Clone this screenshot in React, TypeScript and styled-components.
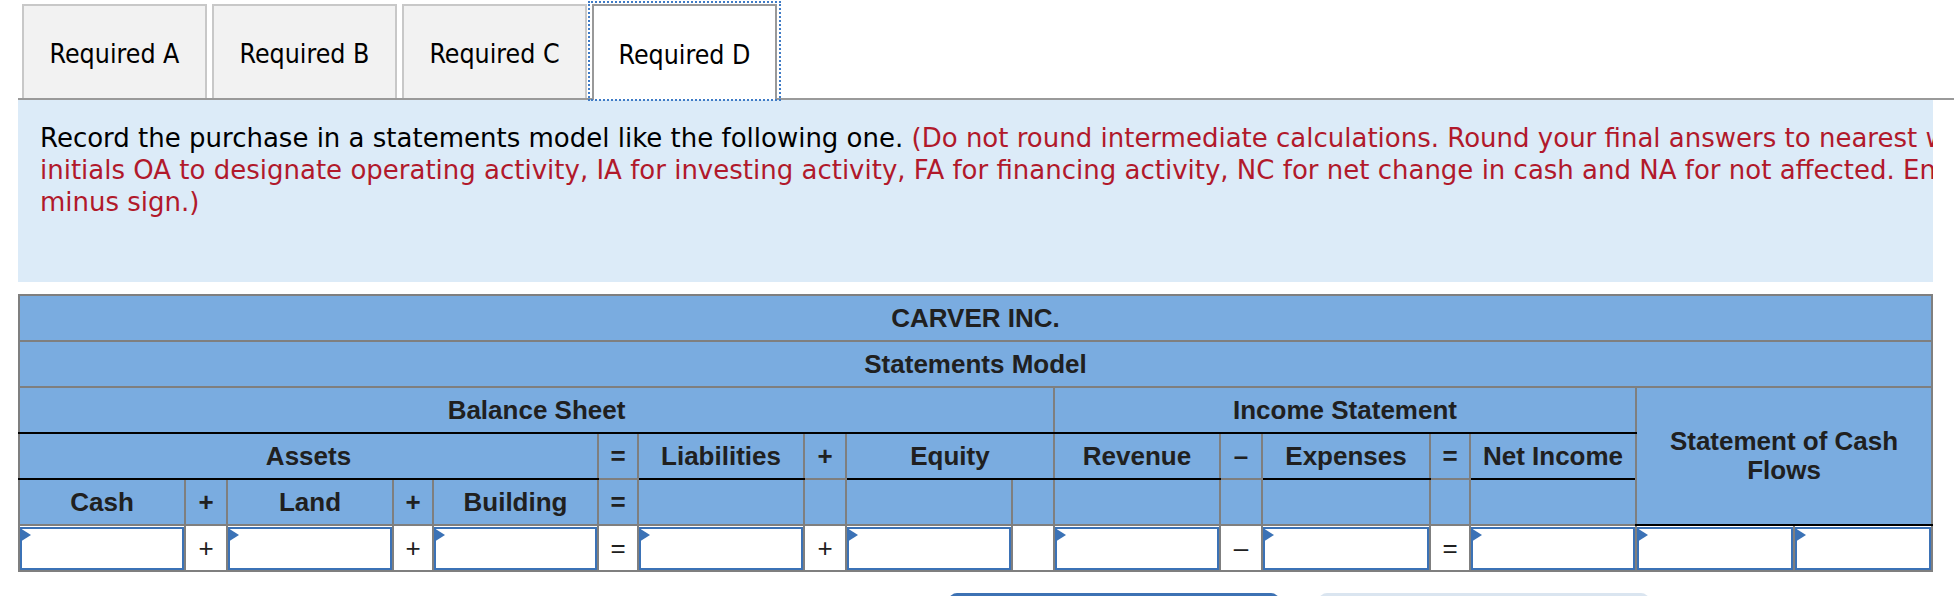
import React from "react";
import styled, { createGlobalStyle, css } from "styled-components";

const GlobalStyle = createGlobalStyle`
  html, body {
    margin: 0;
    padding: 0;
    background: #ffffff;
    overflow: hidden;
  }
  body {
    font-family: "DejaVu Sans", Verdana, sans-serif;
  }
`;

const Page = styled.div`
  padding-left: 18px;
`;

const TabBar = styled.div`
  display: flex;
  gap: 5px;
  padding: 4px 0 0 4px;
  border-bottom: 2px solid #9a9a9a;
  height: 94px;
`;

const Tab = styled.div<{ $active?: boolean }>`
  position: relative;
  box-sizing: border-box;
  width: 185px;
  height: 94px;
  padding-top: 3px;
  display: flex;
  align-items: center;
  justify-content: center;
  background: #f2f2f2;
  border: 2px solid #c8c8c8;
  border-bottom: none;
  color: #000;
  font-family: "DejaVu Sans Condensed", "DejaVu Sans", Verdana, sans-serif;
  font-stretch: condensed;
  font-size: 26.5px;
  ${(p) =>
    p.$active &&
    css`
      height: 96px;
      margin-bottom: -2px;
      background: #ffffff;
      border-color: #999999;
      &::after {
        content: "";
        position: absolute;
        top: -5px;
        left: -6px;
        right: -6px;
        bottom: -1px;
        border: 2px dotted #3f7bc6;
        pointer-events: none;
      }
    `}
`;

const Instructions = styled.div`
  box-sizing: border-box;
  width: 1915px;
  height: 182px;
  padding: 22px 0 0 22px;
  background: #dcebf8;
  overflow: hidden;
  white-space: nowrap;
  font-family: "DejaVu Sans", Verdana, sans-serif;
  font-size: 26px;
  line-height: 32px;
  color: #000;
`;

const Red = styled.span`
  color: #b1192b;
`;

const ModelTable = styled.table`
  margin-top: 12px;
  width: 1915px;
  table-layout: fixed;
  border-collapse: collapse;
  border: 2px solid #7f7f7f;
`;

const Col = styled.col<{ $w: number }>`
  width: ${(p) => p.$w}px;
`;

const HeadCell = styled.td<{ $rule?: boolean }>`
  box-sizing: border-box;
  height: 46px;
  padding: 0 4px;
  background: #7aace0;
  border: 2px solid #7f7f7f;
  ${(p) =>
    p.$rule &&
    css`
      border-bottom-color: #000000;
    `}
  text-align: center;
  vertical-align: middle;
  color: #202020;
  font-family: "Liberation Sans", Arial, sans-serif;
  font-weight: bold;
  font-size: 26px;
  line-height: 29px;
`;

const OpCell = styled.td`
  box-sizing: border-box;
  height: 46px;
  padding: 0;
  background: #ffffff;
  border: 2px solid #7f7f7f;
  text-align: center;
  vertical-align: middle;
  color: #202020;
  font-family: "Liberation Sans", Arial, sans-serif;
  font-size: 26px;
`;

const InputCell = styled.td`
  position: relative;
  box-sizing: border-box;
  height: 46px;
  padding: 0;
  background: #ffffff;
  border: 2px solid #7f7f7f;
`;

const AnswerInput = styled.input`
  display: block;
  box-sizing: border-box;
  width: 100%;
  height: 43px;
  margin: 0;
  padding: 0 6px;
  border: 2px solid #3b72b6;
  background: #ffffff;
  outline: none;
  font-family: "Liberation Sans", Arial, sans-serif;
  font-size: 20px;
`;

const Flag = styled.span`
  position: absolute;
  top: 2px;
  left: 0;
  width: 0;
  height: 0;
  border-top: 7px solid transparent;
  border-bottom: 7px solid transparent;
  border-left: 11px solid #3b72b6;
  pointer-events: none;
`;

const ButtonRow = styled.div`
  display: flex;
  gap: 40px;
  margin-top: 21px;
  padding-left: 931px;
`;

const NavButton = styled.div<{ $primary?: boolean }>`
  width: 330px;
  height: 52px;
  border-radius: 8px;
  background: ${(p) => (p.$primary ? "#3d72b4" : "#dae5f0")};
  color: ${(p) => (p.$primary ? "#ffffff" : "#3d72b4")};
  display: flex;
  align-items: center;
  justify-content: center;
  font-family: "Liberation Sans", Arial, sans-serif;
  font-size: 22px;
`;

const COLS = [166, 42, 166, 40, 165, 40, 166, 42, 166, 42, 166, 42, 168, 40, 166, 158, 138];

const Answer: React.FC = () => (
  <InputCell>
    <AnswerInput type="text" aria-label="answer" />
    <Flag />
  </InputCell>
);

export default function App() {
  return (
    <>
      <GlobalStyle />
      <Page>
        <TabBar>
          <Tab>Required A</Tab>
          <Tab>Required B</Tab>
          <Tab>Required C</Tab>
          <Tab $active>Required D</Tab>
        </TabBar>
        <Instructions>
          Record the purchase in a statements model like the following one.{" "}
          <Red>
            (Do not round intermediate calculations. Round your final answers to nearest whole dollar amount. Use the
            <br />
            initials OA to designate operating activity, IA for investing activity, FA for financing activity, NC for net change in cash and NA for not affected. Enter any decreases to account balances with a
            <br />
            minus sign.)
          </Red>
        </Instructions>
        <ModelTable>
          <colgroup>
            {COLS.map((w, i) => (
              <Col key={i} $w={w} />
            ))}
          </colgroup>
          <tbody>
            <tr>
              <HeadCell colSpan={17}>CARVER INC.</HeadCell>
            </tr>
            <tr>
              <HeadCell colSpan={17}>Statements Model</HeadCell>
            </tr>
            <tr>
              <HeadCell colSpan={10} $rule>
                Balance Sheet
              </HeadCell>
              <HeadCell colSpan={5} $rule>
                Income Statement
              </HeadCell>
              <HeadCell colSpan={2} rowSpan={3} $rule>
                Statement of Cash Flows
              </HeadCell>
            </tr>
            <tr>
              <HeadCell colSpan={5} $rule>
                Assets
              </HeadCell>
              <HeadCell>=</HeadCell>
              <HeadCell $rule>Liabilities</HeadCell>
              <HeadCell>+</HeadCell>
              <HeadCell colSpan={2} $rule>
                Equity
              </HeadCell>
              <HeadCell $rule>Revenue</HeadCell>
              <HeadCell>–</HeadCell>
              <HeadCell $rule>Expenses</HeadCell>
              <HeadCell>=</HeadCell>
              <HeadCell $rule>Net Income</HeadCell>
            </tr>
            <tr>
              <HeadCell>Cash</HeadCell>
              <HeadCell>+</HeadCell>
              <HeadCell>Land</HeadCell>
              <HeadCell>+</HeadCell>
              <HeadCell>Building</HeadCell>
              <HeadCell>=</HeadCell>
              <HeadCell />
              <HeadCell />
              <HeadCell />
              <HeadCell />
              <HeadCell />
              <HeadCell />
              <HeadCell />
              <HeadCell />
              <HeadCell />
            </tr>
            <tr>
              <Answer />
              <OpCell>+</OpCell>
              <Answer />
              <OpCell>+</OpCell>
              <Answer />
              <OpCell>=</OpCell>
              <Answer />
              <OpCell>+</OpCell>
              <Answer />
              <OpCell />
              <Answer />
              <OpCell>–</OpCell>
              <Answer />
              <OpCell>=</OpCell>
              <Answer />
              <Answer />
              <Answer />
            </tr>
          </tbody>
        </ModelTable>
        <ButtonRow>
          <NavButton $primary>‹ Required C</NavButton>
          <NavButton>Required D ›</NavButton>
        </ButtonRow>
      </Page>
    </>
  );
}
